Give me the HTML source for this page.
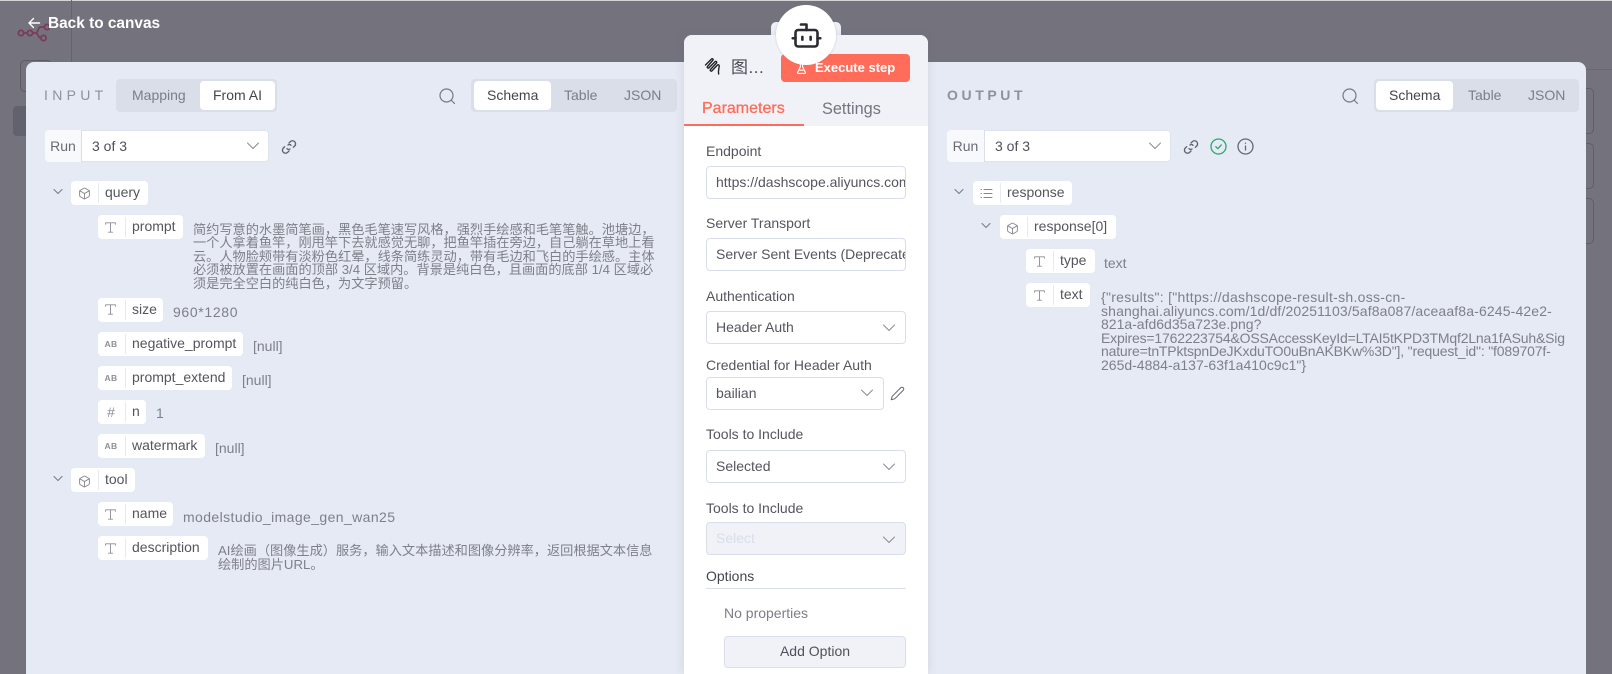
<!DOCTYPE html>
<html lang="en"><head><meta charset="utf-8"><title>Back to canvas</title>
<style>
*{box-sizing:border-box}
html,body{margin:0;padding:0;width:1612px;height:674px;overflow:hidden}
body{position:relative;background:#74727d;font-family:"Liberation Sans","Noto Sans CJK SC",sans-serif;color:#55555f}
#w{position:absolute;left:0;top:0;width:1612px;height:674px;overflow:hidden}
.a{position:absolute}
.t{position:absolute;white-space:nowrap}
svg{position:absolute;fill:none;stroke-linecap:round;stroke-linejoin:round}
.panel{position:absolute;left:26px;top:62px;width:1560px;height:612px;background:#e6eaf4;border-radius:8px 8px 0 0}
.tog{position:absolute;top:79px;height:33px;background:#dadee9;border-radius:4px}
.act{position:absolute;top:81px;height:29px;background:#fff;border-radius:4px}
.tt{position:absolute;top:81px;height:29px;line-height:29px;font-size:14px;color:#7c7d87;white-space:nowrap}
.tt.on{color:#45454f}
.run{position:absolute;height:32px;width:224px;background:#fff;border-radius:4px;box-shadow:0 0 0 1px #dfe3ee inset}
.run .l{position:absolute;left:0;top:0;width:38px;height:32px;background:#f8f9fc;border-right:1px solid #d9deea;border-radius:4px 0 0 4px;color:#6a6b75;font-size:14px;line-height:33px;text-align:center}
.run .v{position:absolute;left:48px;top:0;line-height:33px;font-size:14px;color:#50505a}
.p{position:absolute;height:24px;background:#fff;border-radius:4px;font-size:14px;color:#55555f;line-height:23px;white-space:nowrap}
.p i{position:absolute;left:26.5px;top:2px;bottom:2px;width:1px;background:#e6eaf4}
.p b{position:absolute;left:34px;top:0;font-weight:400}
.p em{position:absolute;left:0;top:0;width:26px;line-height:24px;text-align:center;font-style:normal;color:#8d8e98}
.v{position:absolute;font-size:14px;line-height:14px;color:#7e7f89;white-space:nowrap}
.lb{position:absolute;left:706px;font-size:14px;line-height:16px;color:#55555f;white-space:nowrap}
.in{position:absolute;left:706px;width:200px;height:33px;background:#fff;border:1px solid #d9deea;border-radius:4px;font-size:14px;line-height:31px;padding-left:9px;color:#55555f;white-space:nowrap;overflow:hidden}
.ct{position:absolute;left:684px;top:35px;width:244px;height:639px;background:#fff;border-radius:8px 8px 0 0;box-shadow:0 0 10px rgba(90,100,130,.16)}
.ab{font-size:8.500px;font-weight:700;letter-spacing:.4px}
</style></head><body><div id="w">
<div class="a" style="left:0;top:0;width:1612px;height:1px;background:#d5d4d6"></div>
<div class="a" style="left:71px;top:0;width:1px;height:62px;background:#65636e"></div>
<div class="a" style="left:71px;top:69px;width:1541px;height:1px;background:#696772"></div>
<div class="a" style="left:20px;top:60px;width:32px;height:32px;border:1px solid #5c5a65;border-radius:5px"></div>
<div class="a" style="left:13px;top:106px;width:20px;height:30px;background:#62626f;border-radius:4px"></div>
<div class="a" style="left:1570px;top:88px;width:24px;height:46px;border:1px solid #5f5d68;border-radius:5px"></div>
<div class="a" style="left:1570px;top:143px;width:24px;height:46px;border:1px solid #5f5d68;border-radius:5px"></div>
<div class="a" style="left:1570px;top:198px;width:24px;height:46px;border:1px solid #5f5d68;border-radius:5px"></div>
<svg style="left:17px;top:23px" width="34" height="20" viewBox="0 0 34 20" stroke="#7b3a5b" stroke-width="1.700"><circle cx="4" cy="10" r="2.600"/><circle cx="13" cy="10" r="2.600"/><circle cx="26.500" cy="15" r="2.600"/><circle cx="30" cy="4" r="2.600"/><path d="M6.600 10h3.800M15.600 10h3c3 0 2-6 5-6h4M18.600 10c3 0 2 5 5.300 5"/></svg>
<svg style="left:26px;top:15px" width="16" height="16" viewBox="0 0 16 16" stroke="#fff" stroke-width="1.400"><path d="M13.500 8H3M7.500 3.500 3 8l4.500 4.500"/></svg>
<div class="t" style="left:48px;top:13px;font-size:15.400px;line-height:21px;font-weight:700;color:#fff">Back to canvas</div>

<div class="panel"></div>
<div class="t" style="left:44px;top:86px;font-size:14px;line-height:18px;letter-spacing:4.300px;color:#8f919b;font-weight:400">INPUT</div>
<div class="tog" style="left:116px;width:161px"></div><div class="act" style="left:200px;width:75px"></div>
<div class="tt" style="left:132px">Mapping</div><div class="tt on" style="left:213px">From AI</div>
<svg style="left:438px;top:87px" width="18" height="18" viewBox="0 0 18 18" stroke="#777882" stroke-width="1.200"><circle cx="8.500" cy="8.500" r="6.500"/><path d="m13.500 13.500 3 3"/></svg>
<div class="tog" style="left:471px;width:206px"></div><div class="act" style="left:474px;width:77px"></div>
<div class="tt on" style="left:487px">Schema</div><div class="tt" style="left:564px">Table</div><div class="tt" style="left:624px">JSON</div>
<div class="run" style="left:45px;top:130px"><div class="l" style="width:37px">Run</div><div class="v" style="left:47px">3 of 3</div></div>
<svg style="left:246px;top:141px" width="14" height="10" viewBox="0 0 14 10" stroke="#8a8b95" stroke-width="1"><path d="m1.500 2 5.500 5.500L12.500 2"/></svg>
<svg style="left:281px;top:138.500px" width="16" height="16" viewBox="0 0 24 24" stroke="#5f606a" stroke-width="2"><path d="M12 6l2-2a4.500 4.500 0 0 1 6.500 6.500l-2 2M12 18l-2 2a4.500 4.500 0 0 1-6.500-6.500l2-2M9 14.500c1 1.300 3 1.500 4.500.5M15 9.500c-1-1.300-3-1.500-4.500-.5"/></svg>

<svg style="left:53px;top:188px" width="10" height="8" viewBox="0 0 10 8" stroke="#7c7d87" stroke-width="1.100"><path d="m1 1.500 4 4 4-4"/></svg>
<div class="p" style="left:71px;top:181px;width:77px"><i></i><b>query</b></div>
<svg style="left:78px;top:187px" width="13" height="13" viewBox="0 0 24 24" stroke="#85868f" stroke-width="1.700"><path d="M21 8a2 2 0 0 0-1-1.730l-7-4a2 2 0 0 0-2 0l-7 4A2 2 0 0 0 3 8v8a2 2 0 0 0 1 1.730l7 4a2 2 0 0 0 2 0l7-4A2 2 0 0 0 21 16Z"/><path d="m3.300 7 8.700 5 8.700-5M12 22V12"/></svg>

<div class="p" style="left:98px;top:215px;width:85px"><i></i><b>prompt</b></div>
<svg style="left:105px;top:222px" width="11" height="11" viewBox="0 0 11 11" stroke="#8a8b95" stroke-width=".9"><path d="M.6 2.300V.8h9.800v1.500M5.500.8v9.400M3.500 10.200h4"/></svg>
<div class="v" style="left:193px;top:222.500px;font-size:13.200px;line-height:13.500px">简约写意的水墨简笔画，黑色毛笔速写风格，强烈手绘感和毛笔笔触。池塘边，<br>一个人拿着鱼竿，刚甩竿下去就感觉无聊，把鱼竿插在旁边，自己躺在草地上看<br>云。人物脸颊带有淡粉色红晕，线条简练灵动，带有毛边和飞白的手绘感。主体<br>必须被放置在画面的顶部 3/4 区域内。背景是纯白色，且画面的底部 1/4 区域必<br>须是完全空白的纯白色，为文字预留。</div>

<div class="p" style="left:98px;top:298px;width:65px"><i></i><b>size</b></div>
<svg style="left:105px;top:304px" width="11" height="11" viewBox="0 0 11 11" stroke="#8a8b95" stroke-width=".9"><path d="M.6 2.300V.8h9.800v1.500M5.500.8v9.400M3.500 10.200h4"/></svg>
<div class="v" style="left:173px;top:305px;letter-spacing:.65px">960*1280</div>

<div class="p" style="left:98px;top:332px;width:145px"><em class="ab">AB</em><i></i><b>negative_prompt</b></div>
<div class="v" style="left:253px;top:339px">[null]</div>
<div class="p" style="left:98px;top:366px;width:134px"><em class="ab">AB</em><i></i><b>prompt_extend</b></div>
<div class="v" style="left:242px;top:373px">[null]</div>
<div class="p" style="left:98px;top:400px;width:48px"><em style="font-size:14px">#</em><i></i><b>n</b></div>
<div class="v" style="left:156px;top:405.500px">1</div>
<div class="p" style="left:98px;top:434px;width:107px"><em class="ab">AB</em><i></i><b>watermark</b></div>
<div class="v" style="left:215px;top:441px">[null]</div>

<svg style="left:53px;top:475px" width="10" height="8" viewBox="0 0 10 8" stroke="#7c7d87" stroke-width="1.100"><path d="m1 1.500 4 4 4-4"/></svg>
<div class="p" style="left:71px;top:468px;width:64px"><i></i><b>tool</b></div>
<svg style="left:78px;top:475px" width="13" height="13" viewBox="0 0 24 24" stroke="#85868f" stroke-width="1.700"><path d="M21 8a2 2 0 0 0-1-1.730l-7-4a2 2 0 0 0-2 0l-7 4A2 2 0 0 0 3 8v8a2 2 0 0 0 1 1.730l7 4a2 2 0 0 0 2 0l7-4A2 2 0 0 0 21 16Z"/><path d="m3.300 7 8.700 5 8.700-5M12 22V12"/></svg>

<div class="p" style="left:98px;top:502px;width:75px"><i></i><b>name</b></div>
<svg style="left:105px;top:509px" width="11" height="11" viewBox="0 0 11 11" stroke="#8a8b95" stroke-width=".9"><path d="M.6 2.300V.8h9.800v1.500M5.500.8v9.400M3.500 10.200h4"/></svg>
<div class="v" style="left:183px;top:509.500px;letter-spacing:.4px">modelstudio_image_gen_wan25</div>
<div class="p" style="left:98px;top:536px;width:110px"><i></i><b>description</b></div>
<svg style="left:105px;top:543px" width="11" height="11" viewBox="0 0 11 11" stroke="#8a8b95" stroke-width=".9"><path d="M.6 2.300V.8h9.800v1.500M5.500.8v9.400M3.500 10.200h4"/></svg>
<div class="v" style="left:218px;top:544px;font-size:13.200px">AI绘画（图像生成）服务，输入文本描述和图像分辨率，返回根据文本信息<br>绘制的图片URL。</div>

<div class="t" style="left:947px;top:86px;font-size:14px;line-height:18px;letter-spacing:3.600px;font-weight:700;color:#8f919b">OUTPUT</div>
<svg style="left:1341px;top:87px" width="18" height="18" viewBox="0 0 18 18" stroke="#777882" stroke-width="1.200"><circle cx="8.500" cy="8.500" r="6.500"/><path d="m13.500 13.500 3 3"/></svg>
<div class="tog" style="left:1374px;width:205px"></div><div class="act" style="left:1376px;width:77px"></div>
<div class="tt on" style="left:1389px">Schema</div><div class="tt" style="left:1468px">Table</div><div class="tt" style="left:1528px">JSON</div>
<div class="run" style="left:947px;top:130px"><div class="l">Run</div><div class="v">3 of 3</div></div>
<svg style="left:1148px;top:141px" width="14" height="10" viewBox="0 0 14 10" stroke="#8a8b95" stroke-width="1"><path d="m1.500 2 5.500 5.500L12.500 2"/></svg>
<svg style="left:1183px;top:138.500px" width="16" height="16" viewBox="0 0 24 24" stroke="#5f606a" stroke-width="2"><path d="M12 6l2-2a4.500 4.500 0 0 1 6.500 6.500l-2 2M12 18l-2 2a4.500 4.500 0 0 1-6.500-6.500l2-2M9 14.500c1 1.300 3 1.500 4.500.5M15 9.500c-1-1.300-3-1.500-4.500-.5"/></svg>
<svg style="left:1209.500px;top:137.500px" width="17" height="17" viewBox="0 0 17 17" stroke="#2ba66c" stroke-width="1.300"><circle cx="8.500" cy="8.500" r="7.500"/><path d="m5.800 8.700 2 2 3.500-3.800"/></svg>
<svg style="left:1236.500px;top:137.500px" width="17" height="17" viewBox="0 0 17 17" stroke="#666771" stroke-width="1.300"><circle cx="8.500" cy="8.500" r="7.500"/><path d="M8.500 8v4M8.500 5.200v.1"/></svg>

<svg style="left:954px;top:188px" width="10" height="8" viewBox="0 0 10 8" stroke="#7c7d87" stroke-width="1.100"><path d="m1 1.500 4 4 4-4"/></svg>
<div class="p" style="left:973px;top:181px;width:99px"><i></i><b>response</b></div>
<svg style="left:980px;top:187px" width="13" height="13" viewBox="0 0 13 13" stroke="#85868f" stroke-width="1"><path d="M4 2.500h8M4 6.500h8M4 10.500h8M1 2.500h.5M1 6.500h.5M1 10.500h.5"/></svg>
<svg style="left:981px;top:222px" width="10" height="8" viewBox="0 0 10 8" stroke="#7c7d87" stroke-width="1.100"><path d="m1 1.500 4 4 4-4"/></svg>
<div class="p" style="left:1000px;top:215px;width:116px"><i></i><b>response[0]</b></div>
<svg style="left:1006px;top:222px" width="13" height="13" viewBox="0 0 24 24" stroke="#85868f" stroke-width="1.700"><path d="M21 8a2 2 0 0 0-1-1.730l-7-4a2 2 0 0 0-2 0l-7 4A2 2 0 0 0 3 8v8a2 2 0 0 0 1 1.730l7 4a2 2 0 0 0 2 0l7-4A2 2 0 0 0 21 16Z"/><path d="m3.300 7 8.700 5 8.700-5M12 22V12"/></svg>
<div class="p" style="left:1026px;top:249px;width:69px"><i></i><b>type</b></div>
<svg style="left:1034px;top:256px" width="11" height="11" viewBox="0 0 11 11" stroke="#8a8b95" stroke-width=".9"><path d="M.6 2.300V.8h9.800v1.500M5.500.8v9.400M3.500 10.200h4"/></svg>
<div class="v" style="left:1104px;top:256px">text</div>
<div class="p" style="left:1026px;top:283px;width:64px"><i></i><b>text</b></div>
<svg style="left:1034px;top:290px" width="11" height="11" viewBox="0 0 11 11" stroke="#8a8b95" stroke-width=".9"><path d="M.6 2.300V.8h9.800v1.500M5.500.8v9.400M3.500 10.200h4"/></svg>
<div class="v" style="left:1101px;top:291px;line-height:13.500px"><span style="letter-spacing:.29px">{"results": ["https://dashscope-result-sh.oss-cn-</span><br><span style="letter-spacing:.14px">shanghai.aliyuncs.com/1d/df/20251103/5af8a087/aceaaf8a-6245-42e2-</span><br>821a-afd6d35a723e.png?<br><span style="letter-spacing:-.18px">Expires=1762223754&amp;OSSAccessKeyId=LTAI5tKPD3TMqf2Lna1fASuh&amp;Sig</span><br><span style="letter-spacing:-.18px">nature=tnTPktspnDeJKxduTO0uBnAKBKw%3D"], "request_id": "f089707f-</span><br>265d-4884-a137-63f1a410c9c1"}</div>

<div class="a" style="left:771px;top:22px;width:70px;height:20px;background:#eff1f8;border-radius:5px 5px 0 0"></div>
<div class="ct"></div>
<div class="a" style="left:684px;top:35px;width:244px;height:91px;background:#f0f2f8;border-radius:8px 8px 0 0"></div>
<div class="a" style="left:684px;top:124px;width:120px;height:2px;background:#ff6d5a"></div>
<svg style="left:704px;top:57px" width="17" height="19" viewBox="0 0 17 19" stroke="#222229" stroke-width="1.400"><path d="M1.500 8 7.500 2c1-.8 2 .2 1.500 1L3.500 9.500c-.8 1 .7 2.200 1.500 1.300L11 4.700c1-.8 2.200.3 1.500 1.300L6.500 12.500c-.8 1 .7 2.200 1.500 1.300l5.500-5.800c1-.8 2 .3 1.700 1.500-.3 2-1.200 5-.5 7.500"/></svg>
<div class="t" style="left:731px;top:57px;font-size:17px;line-height:22px;color:#4a4a54;letter-spacing:.5px">图...</div>
<div class="a" style="left:781px;top:54px;width:129px;height:28px;background:#ff6d5a;border-radius:4px"></div>
<svg style="left:795px;top:61px" width="13" height="14" viewBox="0 0 24 24" stroke="#fff" stroke-width="2"><path d="M10 2v7.500L4.700 20.500a1 1 0 0 0 .9 1.500h12.800a1 1 0 0 0 .9-1.500L14 9.500V2M8.500 2h7M7 16h10"/></svg>
<div class="t" style="left:815px;top:57px;font-size:13px;line-height:22px;font-weight:700;color:#fff">Execute step</div>
<div class="t" style="left:702px;top:97.500px;font-size:16px;line-height:22px;color:#ff6d5a;-webkit-text-stroke:.3px #ff6d5a">Parameters</div>
<div class="t" style="left:822px;top:97.500px;font-size:16.300px;line-height:22px;color:#73747e">Settings</div>

<div class="a" style="left:776px;top:5px;width:60px;height:60px;background:#fff;border-radius:50%;box-shadow:0 0 2px rgba(120,125,140,.35)"></div>
<svg style="left:789.500px;top:19px" width="33" height="33" viewBox="0 0 24 24" stroke="#2b2b33" stroke-width="1.900"><path d="M12 8V4H8"/><rect x="4" y="8" width="16" height="12" rx="2"/><path d="M2 14h2M20 14h2M15 13v2M9 13v2"/></svg>

<div class="lb" style="top:143px">Endpoint</div>
<div class="in" style="top:166px">https://dashscope.aliyuncs.com/api</div>
<div class="lb" style="top:215px">Server Transport</div>
<div class="in" style="top:238px">Server Sent Events (Deprecated)</div>
<div class="lb" style="top:288px">Authentication</div>
<div class="in" style="top:311px">Header Auth</div>
<svg style="left:882px;top:323px" width="14" height="10" viewBox="0 0 14 10" stroke="#8a8b95" stroke-width="1"><path d="m1.500 2 5.500 5.500L12.500 2"/></svg>
<div class="lb" style="top:357px">Credential for Header Auth</div>
<div class="in" style="top:377px;width:178px">bailian</div>
<svg style="left:860px;top:388px" width="14" height="10" viewBox="0 0 14 10" stroke="#8a8b95" stroke-width="1"><path d="m1.500 2 5.500 5.500L12.500 2"/></svg>
<svg style="left:890px;top:386px" width="15" height="15" viewBox="0 0 24 24" stroke="#666771" stroke-width="1.600"><path d="M17 3a2.850 2.830 0 1 1 4 4L7.500 20.500 2 22l1.500-5.500Z"/></svg>
<div class="lb" style="top:426px">Tools to Include</div>
<div class="in" style="top:450px">Selected</div>
<svg style="left:882px;top:462px" width="14" height="10" viewBox="0 0 14 10" stroke="#8a8b95" stroke-width="1"><path d="m1.500 2 5.500 5.500L12.500 2"/></svg>
<div class="lb" style="top:499.500px">Tools to Include</div>
<div class="in" style="top:522px;background:#f0f2f8;color:#d9deea">Select</div>
<svg style="left:882px;top:535px" width="14" height="10" viewBox="0 0 14 10" stroke="#8a8b95" stroke-width="1"><path d="m1.500 2 5.500 5.500L12.500 2"/></svg>
<div class="lb" style="top:568px;color:#45454f">Options</div>
<div class="a" style="left:706px;top:588px;width:200px;height:1px;background:#d9deea"></div>
<div class="lb" style="left:724px;top:605px;color:#7c7d87">No properties</div>
<div class="a" style="left:724px;top:636px;width:182px;height:32px;background:#f0f2f8;border:1px solid #d9deea;border-radius:4px;text-align:center;font-size:14px;line-height:29px;color:#50505a">Add Option</div>
</div></body></html>
